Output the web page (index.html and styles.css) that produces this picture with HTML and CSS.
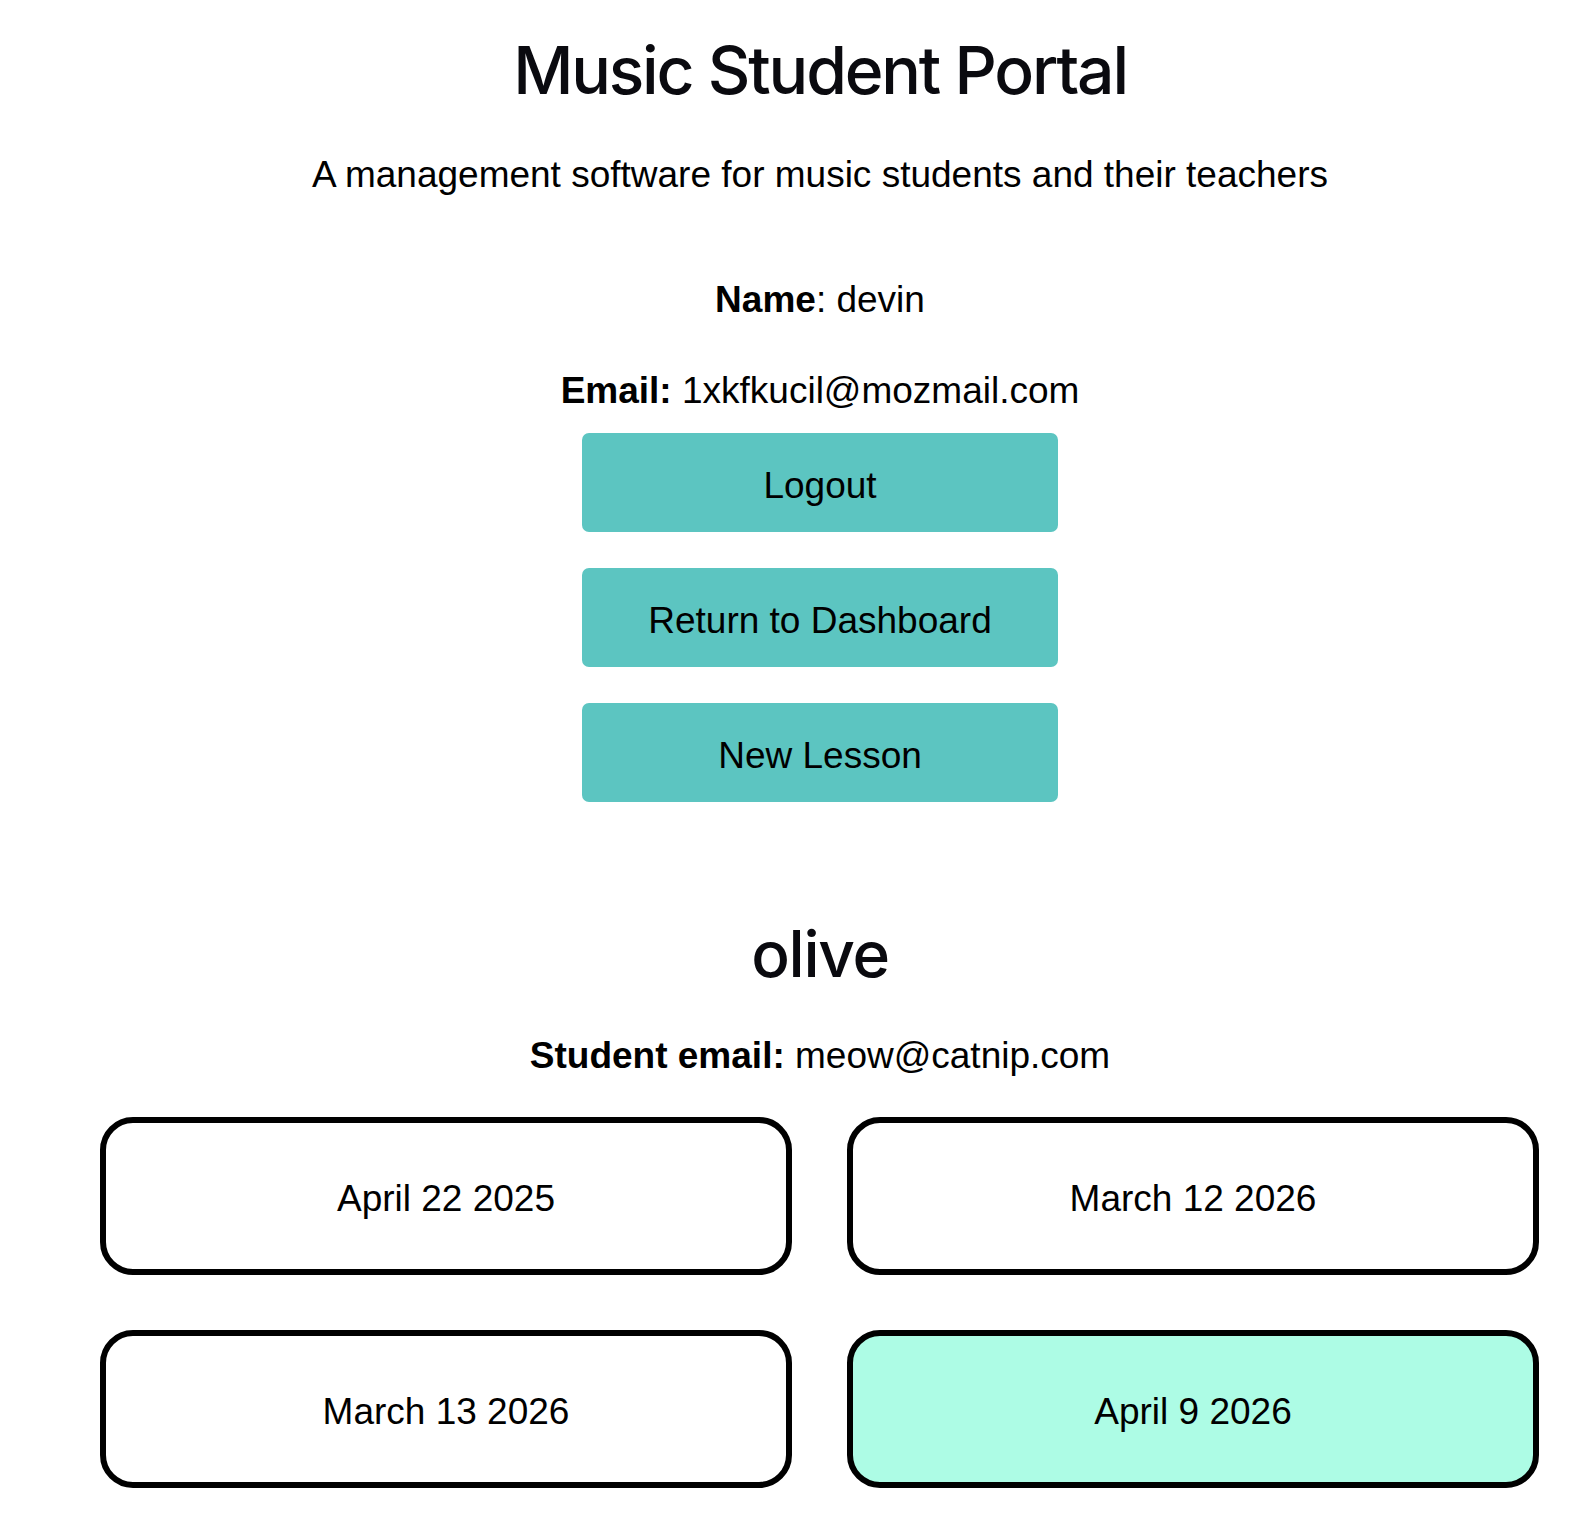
FILE: index.html
```html
<!DOCTYPE html>
<html lang="en">
<head>
<meta charset="utf-8">
<title>Music Student Portal</title>
<link rel="stylesheet" href="styles.css">
</head>
<body>
<div class="page">
  <header class="hero">
    <h1 class="title">Music Student Portal</h1>
    <p class="subtitle">A management software for music students and their teachers</p>
  </header>
  <section class="account">
    <p class="info info-name"><strong>Name</strong>: devin</p>
    <p class="info info-email"><strong>Email:</strong> 1xkfkucil@mozmail.com</p>
    <div class="actions">
      <button class="btn" type="button">Logout</button>
      <button class="btn" type="button">Return to Dashboard</button>
      <button class="btn" type="button">New Lesson</button>
    </div>
  </section>
  <section class="student">
    <h2 class="student-name">olive</h2>
    <p class="info student-email"><strong>Student email:</strong> meow@catnip.com</p>
    <div class="lessons">
      <div class="lesson">April 22 2025</div>
      <div class="lesson">March 12 2026</div>
      <div class="lesson">March 13 2026</div>
      <div class="lesson lesson-active">April 9 2026</div>
    </div>
  </section>
</div>
</body>
</html>
```
FILE: styles.css
```css
html, body {
  margin: 0;
  padding: 0;
  background: #ffffff;
}

body {
  font-family: "Liberation Sans", Arial, Helvetica, sans-serif;
  font-size: 37px;
  line-height: 44px;
  color: #000000;
}

.page {
  padding-left: 56px;
  text-align: center;
}

.hero {
  padding-top: 37px;
}

.title {
  margin: 0;
  font-family: Inter, "Liberation Sans", sans-serif;
  font-size: 66px;
  line-height: 66px;
  font-weight: 500;
  letter-spacing: -0.033em;
  color: #0a0a0f;
}

.subtitle {
  margin: 50px 0 0;
}

.account {
  display: flex;
  flex-direction: column;
  align-items: center;
}

.info {
  margin: 0;
}

.info strong {
  font-weight: 700;
}

.info-name {
  margin-top: 81px;
}

.info-email {
  margin-top: 47px;
}

.actions {
  margin-top: 20px;
  display: flex;
  flex-direction: column;
  gap: 36px;
}

.btn {
  width: 476px;
  height: 99px;
  border: none;
  border-radius: 7px;
  background: #5cc5c1;
  color: #000000;
  font-family: "Liberation Sans", Arial, Helvetica, sans-serif;
  font-size: 37px;
  line-height: 44px;
  padding: 6px 0 0;
  cursor: pointer;
}

.student {
  margin-top: 120px;
}

.student-name {
  margin: 0;
  font-family: Inter, "Liberation Sans", sans-serif;
  font-size: 64px;
  line-height: 64px;
  font-weight: 500;
  letter-spacing: -0.02em;
  color: #0a0a0f;
}

.student-email {
  margin-top: 48px;
}

.lessons {
  margin: 39px 45px 0 44px;
  display: grid;
  grid-template-columns: 1fr 1fr;
  gap: 55px;
}

.lesson {
  height: 140px;
  padding-top: 6px;
  border: 6px solid #000000;
  border-radius: 33px;
  display: flex;
  align-items: center;
  justify-content: center;
  background: #ffffff;
}

.lesson-active {
  background: #adfce5;
}
```
